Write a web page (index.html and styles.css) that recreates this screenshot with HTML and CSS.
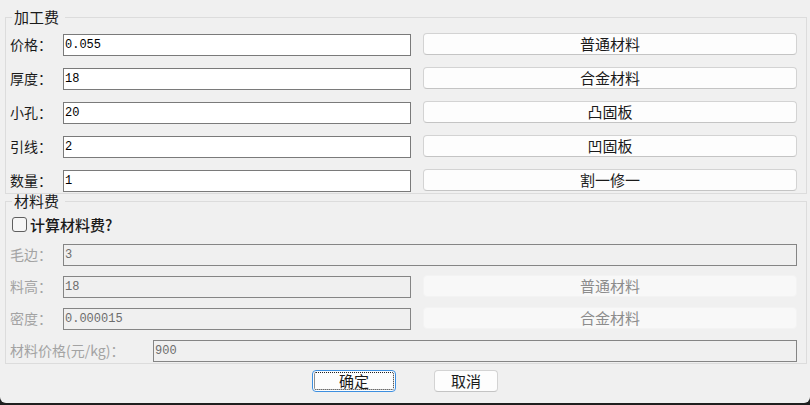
FILE: index.html
```html
<!DOCTYPE HTML>
<html>

<head>
  <meta charset="utf-8">
  <link rel="stylesheet" href="styles.css">
</head>

<body>

  <div class="window">

    <fieldset class="group group-fee">
      <legend>加工费</legend>
      <div class="row">
        <label class="label">价格：</label>
        <input class="field" type="text" value="0.055">
        <button class="btn side">普通材料</button>
      </div>
      <div class="row">
        <label class="label">厚度：</label>
        <input class="field" type="text" value="18">
        <button class="btn side">合金材料</button>
      </div>
      <div class="row">
        <label class="label">小孔：</label>
        <input class="field" type="text" value="20">
        <button class="btn side">凸固板</button>
      </div>
      <div class="row">
        <label class="label">引线：</label>
        <input class="field" type="text" value="2">
        <button class="btn side">凹固板</button>
      </div>
      <div class="row">
        <label class="label">数量：</label>
        <input class="field" type="text" value="1">
        <button class="btn side">割一修一</button>
      </div>
    </fieldset>

    <fieldset class="group group-material">
      <legend>材料费</legend>
      <label class="check"><span class="box"></span>计算材料费?</label>
      <div class="row off">
        <label class="label">毛边：</label>
        <input class="field wide" type="text" value="3" disabled>
      </div>
      <div class="row off">
        <label class="label">料高：</label>
        <input class="field" type="text" value="18" disabled>
        <button class="btn side" disabled>普通材料</button>
      </div>
      <div class="row off">
        <label class="label">密度：</label>
        <input class="field" type="text" value="0.000015" disabled>
        <button class="btn side" disabled>合金材料</button>
      </div>
      <div class="row off">
        <label class="label long">材料价格(元/kg)：</label>
        <input class="field wide" type="text" value="900" disabled>
      </div>
    </fieldset>

    <div class="actions">
      <button class="btn ok">确定</button>
      <button class="btn cancel">取消</button>
    </div>

  </div>

</body>
</html>
```

FILE: styles.css
```css
body {
  margin: 0;
  background: #1f1f1f;
  font-family: "Noto Sans CJK SC", "Noto Sans", sans-serif;
  color: #1a1a1a;
}

.window {
  box-sizing: border-box;
  width: 810px;
  height: 403px;
  padding: 9px 3px 0 5px;
  background: #f0f0f0;
  border-radius: 0 0 6px 6px;
}

/* group boxes */
.group {
  margin: 0;
  min-width: 0;
  border: 1px solid #dcdcdc;
  padding: 8px 9px 1px 4px;
}
.group legend {
  font-size: 15px;
  line-height: 16px;
  padding: 0 6px 0 2px;
  margin-left: 2px;
}
.group-material {
  margin-top: -1px;
  padding-top: 6px;
}

/* rows */
.row {
  display: flex;
  align-items: flex-start;
  height: 23px;
}
.group-fee .row + .row {
  margin-top: 11px;
}
.group-material .row + .row {
  margin-top: 9px;
}
.check + .row {
  margin-top: 10px;
}

.label {
  width: 53px;
  flex: none;
  font-size: 14px;
  line-height: 23px;
  white-space: nowrap;
}
.label.long {
  width: 143px;
}

.field {
  box-sizing: border-box;
  width: 348px;
  height: 22px;
  margin: 1px 0 0;
  padding: 0 1px;
  border: 1px solid #7a7a7a;
  background: #fff;
  font-family: "Liberation Mono", monospace;
  font-size: 12px;
  color: #000;
  outline: none;
}
.field.wide {
  flex: 1;
  width: auto;
}

/* buttons */
.btn {
  box-sizing: border-box;
  height: 22px;
  padding: 0;
  border: 1px solid #d3d3d3;
  border-bottom-color: #c4c4c4;
  border-radius: 4px;
  background: #fdfdfd;
  font-family: "Noto Sans CJK SC", sans-serif;
  font-size: 15px;
  line-height: 20px;
  color: #1a1a1a;
}
.side {
  width: 374px;
  margin-left: 12px;
}

/* disabled part */
.off .label {
  color: #a3a3a3;
}
.off .field {
  background: #f0f0f0;
  border-color: #858585;
  color: #6d6d6d;
}
.off .btn {
  background: #f8f8f8;
  border-color: #f3f3f3;
  color: #8c8c8c;
}

.check {
  display: flex;
  align-items: center;
  height: 18px;
  padding-left: 2px;
  font-size: 15px;
  font-weight: 500;
}
.check .box {
  flex: none;
  box-sizing: border-box;
  width: 15px;
  height: 15px;
  margin-right: 3px;
  border: 1px solid #5f5f5f;
  border-radius: 3px;
  background: #f6f6f6;
}

/* dialog buttons */
.actions {
  display: flex;
  justify-content: center;
  gap: 38px;
  margin-top: 6px;
  padding-right: 2px;
}
.ok {
  width: 84px;
  border: 1px solid #3d8fe0;
  outline: 1px dotted #222;
  outline-offset: -3px;
}
.cancel {
  width: 64px;
}
```
